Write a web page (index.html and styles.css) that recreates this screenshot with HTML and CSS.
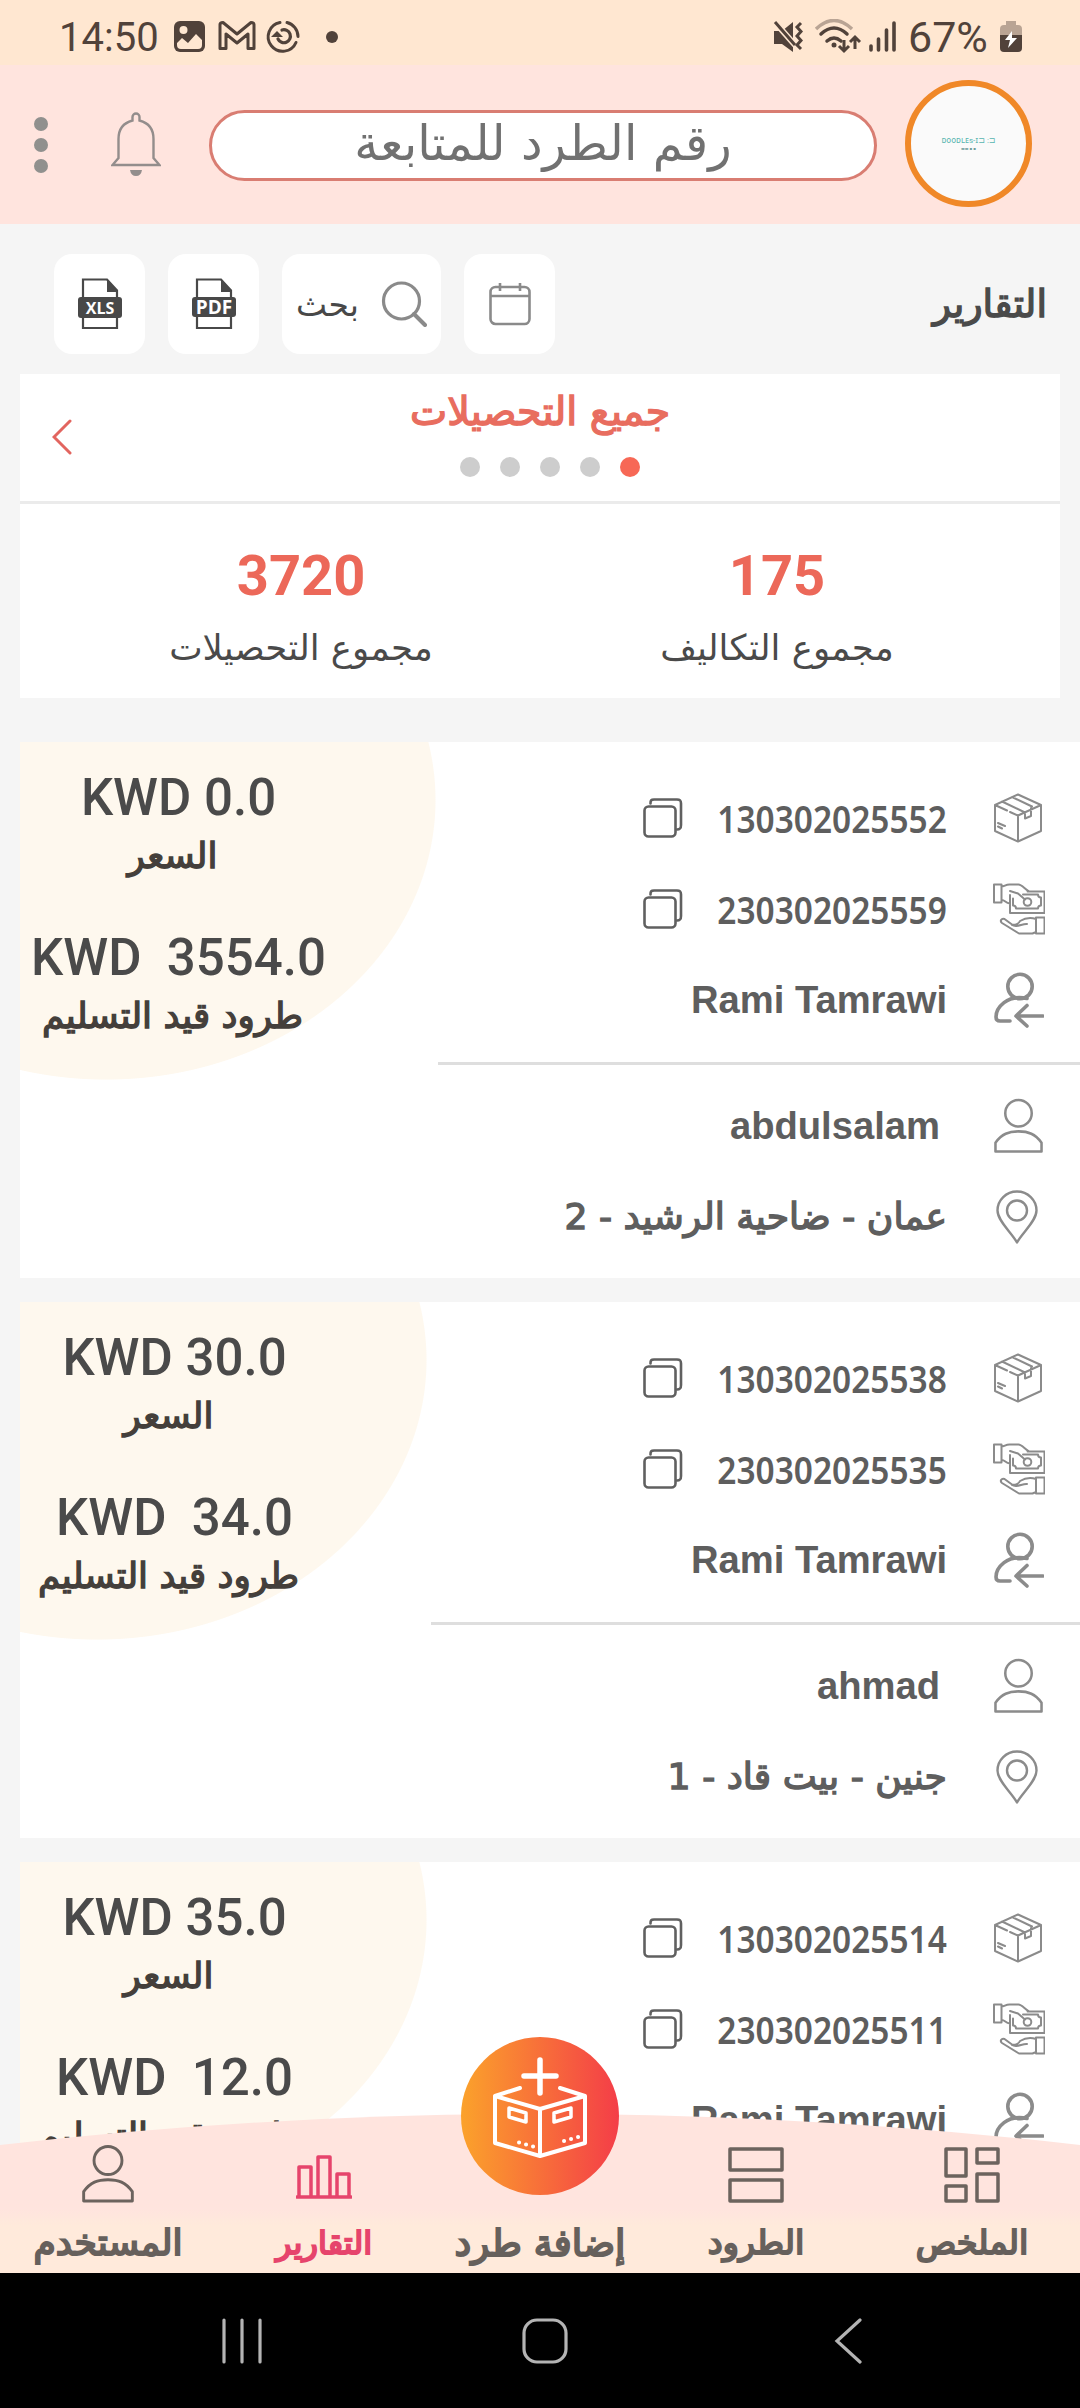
FILE: index.html
```
<!DOCTYPE html>
<html lang="ar" dir="rtl">
<head>
    <meta charset="UTF-8">
    <meta name="viewport" content="width=device-width, initial-scale=1.0">
    <title>التقارير</title>
    <link rel="stylesheet" href="styles.css">
</head>
<body>
    <!-- Shared icons -->
    <svg class="sprite" width="0" height="0">
        <symbol id="icon-box" viewBox="0 0 48 50">
            <path d="M24 1.500 47 12v26L24 48.500 1 38V12z M1 12l12 5.500 M16 19l8 3.500L47 12 M24 22.500v26 M8 8.500l23 11 M18 4l20 9.500 M31 19v6.500l6-2.500v-8 M4 30l7 3 M4 33.500l4 2"/>
        </symbol>
        <symbol id="icon-cash" viewBox="0 0 52 52">
            <path d="M1 1.500h7.500v18H1z M8.500 3.500c3 0 4-2 8-2h9c3 0 6 4 10 6.500 M8.500 17c4 0 3.500 3 8.500 3.500 M34.500 8.500H51.500v21.500H17V12 M17 8l8 2.500 7 6"/>
            <path d="M30 11.500h15c0 2 1 3 3 3v8c-2 0-3 1-3 3H23c0-2-1-3-3-3v-7"/>
            <circle cx="34.500" cy="19" r="3.800"/>
            <path d="M43 34.500h8.500v16H43z M43 36c-6-2-11-1-16 2-1 3-5 4-8 3.500L11.500 36c-3-1-5 2-2.500 4l17 10.500h13.500L43 49 M19 42c5 3 10-1.500 15-1"/>
        </symbol>
        <symbol id="icon-sender" viewBox="0 0 50 56">
            <circle cx="26" cy="14.500" r="12.200"/>
            <path d="M33 26.500C13 22 2 36 2 45c0 3 1.500 4 4 4h10 M49 44H23 M33 33.500 22 44l11 10"/>
        </symbol>
        <symbol id="icon-user" viewBox="0 0 50 56">
            <circle cx="25" cy="15" r="13.500"/>
            <path d="M1.500 54V45C8 36 15 33.500 25 33.500S42 36 48.500 45v9z"/>
        </symbol>
        <symbol id="icon-pin" viewBox="0 0 42 54">
            <path d="M21 52.500C16 43 1.500 31 1.500 20.500a19.500 19 0 0 1 39 0C40.500 31 26 43 21 52.500z"/>
            <circle cx="21" cy="20.500" r="10"/>
        </symbol>
        <symbol id="icon-copy" viewBox="0 0 40 40">
            <rect x="1.500" y="8.500" width="31" height="30" rx="4"/>
            <path d="M7.500 5.500c0-3 .5-4 3.500-4h23c3 0 4 1 4 4V27c0 3-.5 4.500-4 4.500"/>
        </symbol>
    </svg>

    <div class="status-bar" dir="ltr">
        <span class="clock">14:50</span>
        <svg class="status-left" viewBox="0 0 170 36">
            <rect x="1" y="2" width="31" height="31" rx="6" fill="#51423a"/>
            <circle cx="10.500" cy="11" r="4" fill="#ffe7d1"/>
            <path d="M4 24l5-5 6 5 8-9 6 6v5q0 4-4 4H8q-4 0-4-4z" fill="#ffe7d1"/>
            <path d="M47 29.500V5.500q0-2 3-2L64 15 78 3.500q3 0 3 2v24h-6V15L64 24 53 15v14.500z" fill="none" stroke="#51423a" stroke-width="3" stroke-linejoin="round"/>
            <path d="M107 3.500a14.500 14.500 0 1 0 16 20 M114 3.500a14.500 14.500 0 0 1 11 14" fill="none" stroke="#51423a" stroke-width="3" stroke-linecap="round"/>
            <path d="M105 20a6.500 6.500 0 1 0 4-9" fill="none" stroke="#51423a" stroke-width="3.200" stroke-linecap="round"/>
            <path d="M98 18l6-6 6 6z" fill="#51423a"/>
            <circle cx="159" cy="18" r="6" fill="#51423a"/>
        </svg>
        <svg class="status-right" viewBox="0 0 130 36">
            <path d="M2 12h8l11-9v30l-11-8H2z" fill="#51423a"/>
            <path d="M1 1l22 25" stroke="#ffe7d1" stroke-width="6"/>
            <path d="M3 3l20 23" stroke="#51423a" stroke-width="3"/>
            <path d="M29 4l-4 4 4 4.500-4 4.500 4 4.500-4 4.500 4 4" fill="none" stroke="#51423a" stroke-width="3"/>
            <path d="M44 10q18-17 36 0" fill="none" stroke="#b9a494" stroke-width="3.500"/>
            <path d="M49 15q13-12 26 0 M55 22q7-6 14 0" fill="none" stroke="#51423a" stroke-width="3.500" stroke-linecap="round"/>
            <circle cx="62" cy="26" r="2.500" fill="#51423a"/>
            <path d="M72 21v11 M67 27l5 5 5-5 M83 30V19 M78 23l5-5 5 5" fill="none" stroke="#51423a" stroke-width="3"/>
            <path d="M99 31v-4 M106.500 31V20 M114.500 31V11 M122 31V4" stroke="#51423a" stroke-width="3.600" stroke-linecap="round"/>
        </svg>
        <span class="battery-text">67%</span>
        <svg class="battery" viewBox="0 0 22 34">
            <path d="M6 1h10v4h2q4 0 4 4v6H0V9q0-4 4-4h2z" fill="#b9a494"/>
            <path d="M0 15h22v13q0 4-4 4H4q-4 0-4-4z" fill="#51423a"/>
            <path d="M12 11 5 20h5l-2 8 9-10h-5z" fill="#fff"/>
        </svg>
    </div>

    <header class="header">
        <div class="avatar" dir="ltr">
            <span class="avatar-name">ᴅᴏᴏᴅʟᴇs-ɪ⊐ :⊐</span>
            <span class="avatar-tag">▬▬ ▪ ▪</span>
        </div>
        <div class="search-field"><span class="ar search-placeholder">رقم الطرد للمتابعة</span></div>
        <svg class="bell" viewBox="0 0 50 66">
            <path d="M21.500 8.500V5a3.500 3.500 0 0 1 7 0v3.500C38 11 42.500 18 42.500 27v19l6 7H1.500l6-7V27C7.500 18 12 11 21.500 8.500z" fill="none" stroke="#938d8c" stroke-width="2.400"/>
            <path d="M19 58h12q-1 6-6 6t-6-6z" fill="#938d8c"/>
        </svg>
        <div class="menu-dots"><i></i><i></i><i></i></div>
    </header>

    <section class="toolbar">
        <h1 class="ar semibold title">التقارير</h1>
        <button class="tool">
            <svg width="42" height="44" viewBox="0 0 42 44" fill="none" stroke="#8a8a8a" stroke-width="2.600">
                <rect x="1.500" y="5" width="39" height="37" rx="5"/>
                <path d="M2 14h38 M11 1v8 M31 1v8"/>
            </svg>
        </button>
        <button class="tool tool-search">
            <svg width="46" height="46" viewBox="0 0 46 46" fill="none" stroke="#8a8a8a" stroke-width="3.200">
                <circle cx="20.500" cy="20" r="18"/>
                <path d="M33 33l11 11" stroke-width="4" stroke-linecap="round"/>
            </svg>
            <span class="ar">بحث</span>
        </button>
        <button class="tool">
            <svg width="46" height="52" viewBox="0 0 46 52">
                <path d="M6 1.500h24l10 11V50H6z" fill="none" stroke="#484848" stroke-width="2.200"/>
                <path d="M30 1l11 13H30z" fill="#484848"/>
                <rect x="1" y="19" width="44" height="20" rx="3" fill="#484848"/>
                <text x="23" y="36" class="file-label">PDF</text>
            </svg>
        </button>
        <button class="tool">
            <svg width="46" height="52" viewBox="0 0 46 52">
                <path d="M6 1.500h24l10 11V50H6z" fill="none" stroke="#484848" stroke-width="2.200"/>
                <path d="M30 1l11 13H30z" fill="#484848"/>
                <rect x="1" y="19" width="44" height="21" rx="3" fill="#484848"/>
                <text x="23" y="35.500" class="file-label xls">XLS</text>
            </svg>
        </button>
    </section>

    <section class="summary">
        <div class="summary-head">
            <h2 class="ar semibold">جميع التحصيلات</h2>
            <div class="pager"><i class="active"></i><i></i><i></i><i></i><i></i></div>
            <svg class="chevron" viewBox="0 0 20 36"><path d="M18 2 2 18l16 16"/></svg>
        </div>
        <div class="totals">
            <div class="total"><b>175</b><span class="ar">مجموع التكاليف</span></div>
            <div class="total"><b>3720</b><span class="ar">مجموع التحصيلات</span></div>
        </div>
    </section>

    <main class="list">
        <article class="card card-wide">
            <div class="details">
                <div class="row"><svg class="i-box"><use href="#icon-box"/></svg><span class="code">130302025552</span><svg class="i-copy"><use href="#icon-copy"/></svg></div>
                <div class="row"><svg class="i-cash"><use href="#icon-cash"/></svg><span class="code">230302025559</span><svg class="i-copy"><use href="#icon-copy"/></svg></div>
                <div class="row"><svg class="i-sender"><use href="#icon-sender"/></svg><span class="name">Rami Tamrawi</span></div>
                <hr>
                <div class="row"><svg class="i-user"><use href="#icon-user"/></svg><span class="name">abdulsalam</span></div>
                <div class="row"><svg class="i-pin"><use href="#icon-pin"/></svg><span class="ar semibold address">عمان - ضاحية الرشيد - 2</span></div>
            </div>
            <div class="prices">
                <div class="price" dir="ltr">KWD 0.0</div>
                <div class="ar semibold price-label">السعر</div>
                <div class="price" dir="ltr">KWD&nbsp; 3554.0</div>
                <div class="ar semibold price-label">طرود قيد التسليم</div>
            </div>
        </article>

        <article class="card">
            <div class="details">
                <div class="row"><svg class="i-box"><use href="#icon-box"/></svg><span class="code">130302025538</span><svg class="i-copy"><use href="#icon-copy"/></svg></div>
                <div class="row"><svg class="i-cash"><use href="#icon-cash"/></svg><span class="code">230302025535</span><svg class="i-copy"><use href="#icon-copy"/></svg></div>
                <div class="row"><svg class="i-sender"><use href="#icon-sender"/></svg><span class="name">Rami Tamrawi</span></div>
                <hr>
                <div class="row"><svg class="i-user"><use href="#icon-user"/></svg><span class="name">ahmad</span></div>
                <div class="row"><svg class="i-pin"><use href="#icon-pin"/></svg><span class="ar semibold address">جنين - بيت قاد - 1</span></div>
            </div>
            <div class="prices">
                <div class="price" dir="ltr">KWD 30.0</div>
                <div class="ar semibold price-label">السعر</div>
                <div class="price" dir="ltr">KWD&nbsp; 34.0</div>
                <div class="ar semibold price-label">طرود قيد التسليم</div>
            </div>
        </article>

        <article class="card">
            <div class="details">
                <div class="row"><svg class="i-box"><use href="#icon-box"/></svg><span class="code">130302025514</span><svg class="i-copy"><use href="#icon-copy"/></svg></div>
                <div class="row"><svg class="i-cash"><use href="#icon-cash"/></svg><span class="code">230302025511</span><svg class="i-copy"><use href="#icon-copy"/></svg></div>
                <div class="row"><svg class="i-sender"><use href="#icon-sender"/></svg><span class="name">Rami Tamrawi</span></div>
            </div>
            <div class="prices">
                <div class="price" dir="ltr">KWD 35.0</div>
                <div class="ar semibold price-label">السعر</div>
                <div class="price" dir="ltr">KWD&nbsp; 12.0</div>
                <div class="ar semibold price-label">طرود قيد التسليم</div>
            </div>
        </article>
    </main>

    <nav class="tabs">
        <svg class="tabs-bg" viewBox="0 0 1080 159" preserveAspectRatio="none">
            <defs>
                <linearGradient id="tabs-fill" x1="0" y1="0" x2="0" y2="1">
                    <stop offset=".6" stop-color="#ffe4de"/>
                    <stop offset=".7" stop-color="#ffeadb"/>
                </linearGradient>
            </defs>
            <path d="M0 31Q540-31 1080 31V159H0z" fill="url(#tabs-fill)"/>
        </svg>
        <a class="tab">
            <svg width="56" height="56" viewBox="0 0 56 56">
                <path d="M2 2h20v27H2z M33 2h21v14H33z M33 27h21v27H33z M2 39h20v15H2z"/>
            </svg>
            <span class="ar semibold">الملخص</span>
        </a>
        <a class="tab">
            <svg width="56" height="56" viewBox="0 0 56 56">
                <path d="M2 2h52v21H2z M2 33h52v21H2z"/>
            </svg>
            <span class="ar semibold">الطرود</span>
        </a>
        <a class="tab tab-add">
            <svg width="158" height="158" viewBox="0 0 158 158">
                <defs>
                    <linearGradient id="add-fill">
                        <stop offset="0" stop-color="#fba22b"/>
                        <stop offset="1" stop-color="#f43d48"/>
                    </linearGradient>
                </defs>
                <circle cx="79" cy="79" r="79" fill="url(#add-fill)" stroke="none"/>
                <path d="M79 23v33 M63 39h32" stroke-width="5.500"/>
                <path d="M59 51 34 59l45 13 45-13-25-8 M34 59v47l45 13 45-13V59 M79 72v47" stroke-width="4"/>
                <path d="M48 71l17 5v9l-17-5z M93 76l17-5v9l-17 5z" stroke-width="3.500"/>
                <path d="M58 105.500h.1 M65 107.500h.1 M72 109.500h.1 M103 104h.1 M110 102h.1 M117 100h.1" stroke-width="4"/>
            </svg>
            <span class="ar semibold">إضافة طرد</span>
        </a>
        <a class="tab active">
            <svg width="56" height="56" viewBox="0 0 56 56">
                <path d="M1 50h54 M3 50V20h12v30 M22 50V10h12v40 M41 50V27h12v23" stroke-width="3.500"/>
            </svg>
            <span class="ar semibold">التقارير</span>
        </a>
        <a class="tab tab-user">
            <svg width="52" height="58" viewBox="0 0 50 56"><use href="#icon-user"/></svg>
            <span class="ar semibold">المستخدم</span>
        </a>
    </nav>

    <footer class="system-nav" dir="ltr">
        <svg width="40" height="46" viewBox="0 0 40 46"><path d="M2 2v42 M20 2v42 M38 2v42"/></svg>
        <svg width="46" height="46" viewBox="0 0 46 46"><rect x="2" y="2" width="42" height="42" rx="13"/></svg>
        <svg width="28" height="46" viewBox="0 0 28 46"><path d="M26 2 3 23l23 21"/></svg>
    </footer>
</body>
</html>
```
FILE: styles.css
```
* {
    box-sizing: border-box;
}
body {
    display: flex;
    flex-direction: column;
    position: relative;
    width: 1080px;
    height: 2408px;
    margin: 0;
    overflow: hidden;
    background-color: #f5f5f5;
    color: #4a4a4a;
    font-family: Roboto, "DejaVu Sans", sans-serif;
}
h1, h2 {
    margin: 0;
    font-weight: normal;
}
svg {
    display: block;
    flex: none;
}
.sprite {
    position: absolute;
}
.ar {
    font-family: "DejaVu Sans", sans-serif;
    white-space: nowrap;
}
/* The bold Arabic cut is too wide, so thicken the regular one */
.semibold {
    -webkit-text-stroke: 1.4px currentColor;
}

/* Status bar */
.status-bar {
    display: flex;
    align-items: center;
    flex: none;
    height: 65px;
    padding: 9px 58px 0 59px;
    background-color: #ffe7d1;
    color: #51423a;
    font-size: 40px;
}
.clock {
    width: 114px;
}
.status-left {
    width: 170px;
    height: 36px;
}
.status-right {
    width: 130px;
    height: 36px;
    margin-left: auto;
}
.battery-text {
    width: 83px;
    margin: 0 9px 0 6px;
    font-size: 43px;
}
.battery {
    width: 22px;
    height: 34px;
}

/* Header */
.header {
    display: flex;
    align-items: center;
    flex: none;
    height: 159px;
    padding: 0 48px 0 34px;
    background-color: #ffe4de;
}
.avatar {
    display: flex;
    flex-direction: column;
    align-items: center;
    justify-content: center;
    width: 127px;
    height: 127px;
    margin-bottom: 2px;
    border: 6px solid #f08828;
    border-radius: 50%;
    background-color: #fafafa;
    color: #57b5b0;
}
.avatar-name {
    font-size: 8px;
    line-height: 10px;
}
.avatar-tag {
    color: #6f9c9a;
    font-size: 4px;
    line-height: 6px;
}
.search-field {
    display: flex;
    align-items: center;
    justify-content: center;
    width: 668px;
    height: 71px;
    margin: 2px 28px 0 48px;
    border: 3px solid #d97d72;
    border-radius: 36px;
    background-color: #fff;
}
.search-placeholder {
    margin-bottom: 6px;
    color: #717171;
    font-size: 48.5px;
    line-height: 60px;
}
.bell {
    width: 50px;
    height: 66px;
}
.menu-dots {
    display: flex;
    flex-direction: column;
    gap: 7px;
    margin-right: auto;
}
.menu-dots i {
    width: 14px;
    height: 14px;
    border-radius: 50%;
    background-color: #90908e;
}

/* Toolbar */
.toolbar {
    display: flex;
    align-items: center;
    gap: 23px;
    flex: none;
    height: 150px;
    padding: 10px 33px 0 54px;
}
.title {
    margin-left: auto;
    font-size: 38px;
}
.tool {
    display: flex;
    align-items: center;
    justify-content: center;
    width: 91px;
    height: 100px;
    padding: 0;
    border: none;
    border-radius: 18px;
    background-color: #fff;
}
.tool-search {
    gap: 22px;
    width: 159px;
    color: #484848;
    font-size: 33px;
}
.file-label {
    fill: #fff;
    font: bold 19px "Open Sans", sans-serif;
    text-anchor: middle;
}
.xls {
    font-size: 16px;
}

/* Summary */
.summary {
    flex: none;
    height: 324px;
    margin: 0 20px 44px;
    background-color: #fff;
}
.summary-head {
    display: grid;
    grid-template-columns: 60px 1fr 60px;
    grid-template-rows: 73px 56px;
    align-items: center;
    justify-items: center;
    height: 130px;
    border-bottom: 3px solid #ebebeb;
}
.summary-head h2 {
    grid-column: 2;
    color: #e86d5f;
    font-size: 39.5px;
    line-height: 44px;
}
.pager {
    display: flex;
    grid-column: 2;
    gap: 20px;
    margin: -16px 0 0 19px;
}
.pager i {
    width: 20px;
    height: 20px;
    border-radius: 50%;
    background-color: #cdcdcd;
}
.pager i.active {
    background-color: #f76856;
}
.chevron {
    grid-column: 3;
    grid-row: 1 / 3;
    justify-self: end;
    width: 20px;
    height: 36px;
    margin: 0 0 4px 32px;
    fill: none;
    stroke: #e2655f;
    stroke-width: 3;
    stroke-linecap: round;
}
.totals {
    display: flex;
    padding: 36px 45px 0 43px;
}
.total {
    display: flex;
    flex: 1;
    flex-direction: column;
    align-items: center;
}
.total b {
    color: #ec6859;
    font-size: 56px;
    line-height: 72px;
}
.total span {
    margin-top: 14px;
    font-size: 35.5px;
    line-height: 44px;
}

/* Parcels list */
.list {
    display: flex;
    flex-direction: column;
    gap: 24px;
    flex: 1;
    margin-left: 20px;
    overflow: hidden;
}
.card {
    display: flex;
    flex: none;
    height: 536px;
    background: #fff radial-gradient(ellipse 330px 280px at 77px 58px, #fef8ee 99.7%, transparent 100%);
}
.card-wide {
    background: #fff radial-gradient(ellipse 330px 280px at 86px 58px, #fef8ee 99.7%, transparent 100%);
}
.details {
    flex: 1;
    padding-top: 30px;
}
.row {
    display: flex;
    align-items: center;
    height: 91px;
    padding-right: 38px;
    color: #5e5e5e;
}
.row svg {
    fill: none;
    stroke: #8b8b8b;
    stroke-width: 2;
    stroke-linecap: round;
    stroke-linejoin: round;
}
.row .i-box {
    width: 48px;
    height: 50px;
    margin-left: 47px;
}
.row .i-cash {
    width: 52px;
    height: 52px;
    margin: 0 -3px 0 46px;
}
.row .i-sender {
    width: 50px;
    height: 56px;
    margin: 0 -2px 0 47px;
    stroke-width: 3.6;
}
.row .i-user {
    width: 49px;
    height: 56px;
    margin: 0 -1px 0 54px;
    stroke-width: 2.6;
}
.row .i-pin {
    width: 42px;
    height: 54px;
    margin: 0 4px 0 49px;
    stroke-width: 2.4;
}
.row .i-copy {
    width: 40px;
    height: 40px;
    margin-right: 34px;
    stroke: #606060;
    stroke-width: 2.6;
}
.code {
    margin-left: -31px;
    direction: ltr;
    font-family: "Noto Sans", sans-serif;
    font-size: 38px;
    font-weight: 600;
    transform: scaleX(.88);
    transform-origin: right;
}
.name {
    direction: ltr;
    font-family: "Liberation Sans", sans-serif;
    font-size: 38.2px;
    font-weight: bold;
}
.address {
    font-size: 36.2px;
}
hr {
    height: 3px;
    margin: 17px 0 15px;
    border: none;
    background-color: #dedede;
}
.prices {
    display: flex;
    flex-direction: column;
    align-items: center;
    width: 411px;
    padding: 26px 102px 0 0;
    white-space: nowrap;
}
.card-wide .prices {
    width: 418px;
    padding-right: 101px;
}
.price {
    height: 60px;
    font-size: 51px;
    font-weight: 500;
    line-height: 60px;
}
.price-label {
    height: 44px;
    margin: 6px 12px 50px 0;
    color: #443f3b;
    font-size: 35.8px;
    line-height: 44px;
}

/* Bottom tabs */
.tabs {
    display: grid;
    grid-template-columns: repeat(5, 1fr);
    grid-template-rows: 159px;
    position: absolute;
    right: 0;
    bottom: 135px;
    left: 0;
    height: 159px;
    color: #66605c;
}
.tabs-bg {
    position: absolute;
    width: 1080px;
    height: 159px;
}
.tab {
    display: flex;
    position: relative;
    flex-direction: column;
    align-items: center;
    justify-content: flex-end;
    padding-bottom: 10px;
}
.tab svg {
    margin-bottom: 20px;
    fill: none;
    stroke: #6c635e;
    stroke-width: 3.5;
    stroke-linecap: round;
    stroke-linejoin: round;
}
.tab span {
    font-size: 33.5px;
    line-height: 40px;
    -webkit-text-stroke-width: 2px;
}
.tab.active {
    color: #e6446c;
}
.tab.active svg {
    stroke: #e6446c;
}
.tab.active span {
    font-size: 32px;
}
.tab-user svg {
    stroke-width: 2.8;
}
.tab-user span {
    font-size: 36px;
}
.tab-add svg {
    margin-bottom: 28px;
    stroke: #fff;
}
.tab-add span {
    font-size: 37.5px;
}

/* Android navigation */
.system-nav {
    display: flex;
    align-items: center;
    gap: 260px;
    flex: none;
    height: 135px;
    padding-left: 222px;
    background-color: #000;
}
.system-nav svg {
    fill: none;
    stroke: #b4b4b4;
    stroke-width: 3.2;
    stroke-linecap: round;
}
.system-nav svg:last-child {
    margin-left: 6px;
}
```
